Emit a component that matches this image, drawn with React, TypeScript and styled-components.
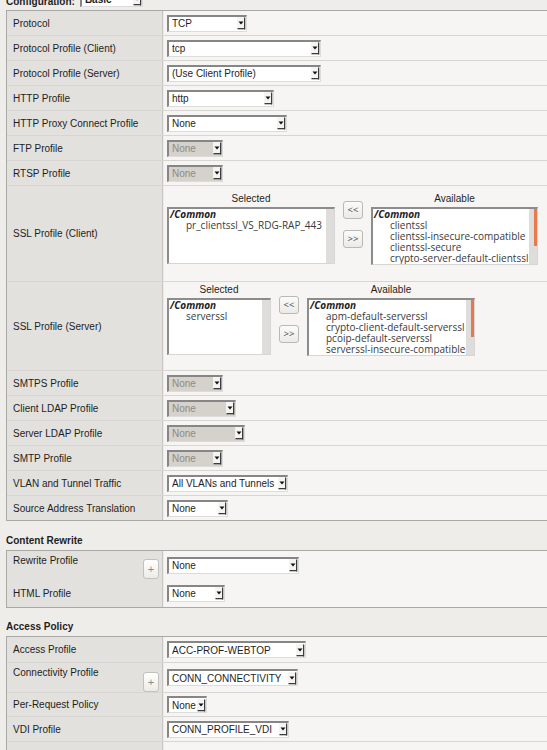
import React from 'react'
import styled, { createGlobalStyle } from 'styled-components'

const Global = createGlobalStyle`
  html, body {
    margin: 0;
    padding: 0;
    background: #eeede9;
    overflow: hidden;
  }
  body {
    font-family: "Liberation Sans", Arial, sans-serif;
    font-size: 10px;
    color: #1e1e1e;
  }
`

const Page = styled.div`
  width: 547px;
  height: 750px;
  overflow: hidden;
`

const TopBar = styled.div`
  display: flex;
  align-items: flex-end;
  gap: 5px;
  height: 15px;
  margin-top: -8px;
  padding: 0 0 3px 6px;
  font-weight: bold;
`

const SectionTitle = styled.div<{ $top: number }>`
  padding: ${(p) => p.$top}px 0 4px 6px;
  line-height: 11px;
  font-weight: bold;
`

const Table = styled.div`
  margin-left: 6px;
  width: 560px;
  border-top: 1px solid #a9a9a6;
  border-left: 1px solid #a9a9a6;
  border-bottom: 1px solid #a9a9a6;
`

const Row = styled.div<{ $h?: number }>`
  display: grid;
  grid-template-columns: 156px 1fr;
  height: ${(p) => p.$h ?? 24}px;
  & + & {
    border-top: 1px solid #d7d6d2;
  }
`

const Label = styled.div<{ $top?: boolean }>`
  display: flex;
  align-items: ${(p) => (p.$top ? 'flex-start' : 'center')};
  justify-content: space-between;
  padding: ${(p) => (p.$top ? '4px 3px 0 6px' : '0 3px 0 6px')};
  line-height: 11px;
  background: #e2e1dd;
  border-right: 1px solid #c6c5c1;
`

const Value = styled.div<{ $padTop?: number }>`
  display: flex;
  align-items: ${(p) => (p.$padTop !== undefined ? 'flex-start' : 'center')};
  padding: ${(p) => p.$padTop ?? 0}px 0 0 3px;
  background: #f6f5f3;
  border-left: 1px solid #ecebe8;
`

const PlusButton = styled.button`
  align-self: center;
  width: 16px;
  height: 20px;
  padding: 0;
  margin-top: 4px;
  border: 1px solid #c2c1bd;
  border-radius: 3px;
  background: linear-gradient(#ffffff, #ecebe8);
  color: #8a8a8a;
  font-family: "Liberation Sans", Arial, sans-serif;
  font-size: 11px;
  line-height: 16px;
`

const SelectBox = styled.div<{ $w: number; $disabled?: boolean }>`
  display: flex;
  align-items: center;
  box-sizing: border-box;
  width: ${(p) => p.$w}px;
  height: 17px;
  padding-left: 3px;
  background: ${(p) => (p.$disabled ? '#d5d2cb' : '#ffffff')};
  color: ${(p) => (p.$disabled ? '#8b8a87' : '#1e1e1e')};
  border-top: 2px solid #868686;
  border-left: 2px solid #868686;
  border-right: 1px solid #dcdcdc;
  border-bottom: 1px solid #dcdcdc;
  white-space: nowrap;
  line-height: 13px;
`

const SelectText = styled.span`
  flex: 1;
  overflow: hidden;
`

const Arrow = () => (
  <svg width="9" height="13" viewBox="0 0 9 13" style={{ flexShrink: 0 }}>
    <rect x="0" y="0" width="8" height="12" fill="#f4f4f2" />
    <path d="M1.5 4.5h5l-2.5 3z" fill="#111" />
    <rect x="7" y="0.5" width="1.3" height="12" fill="#3c3c3c" />
    <rect x="0.5" y="11" width="7.5" height="1.3" fill="#3c3c3c" />
  </svg>
)

const Select: React.FC<{ width: number; value: string; disabled?: boolean }> = ({
  width,
  value,
  disabled,
}) => (
  <SelectBox $w={width} $disabled={disabled}>
    <SelectText>{value}</SelectText>
    <Arrow />
  </SelectBox>
)

const Picker = styled.div`
  display: flex;
  align-items: flex-start;
  gap: 8px;
`

const PickerColumn = styled.div<{ $w: number }>`
  display: flex;
  flex-direction: column;
  width: ${(p) => p.$w}px;
`

const PickerHeading = styled.div`
  text-align: center;
  line-height: 11px;
  height: 11px;
  margin-bottom: 3px;
`

const ListBox = styled.div<{ $h: number }>`
  display: flex;
  box-sizing: border-box;
  height: ${(p) => p.$h}px;
  background: #fff;
  border-top: 2px solid #8c8c8c;
  border-left: 2px solid #8c8c8c;
  border-right: 1px solid #d6d6d6;
  border-bottom: 1px solid #d6d6d6;
  overflow: hidden;
`

const ListItems = styled.div`
  flex: 1;
  min-width: 0;
  padding: 0 0 0 1px;
  font-family: "Open Sans", "Noto Sans", sans-serif;
  font-size: 10px;
  line-height: 11px;
  color: #3a3a3a;
  white-space: nowrap;
  overflow: hidden;
`

const Folder = styled.div`
  font-weight: bold;
  font-style: italic;
  color: #222;
`

const Item = styled.div`
  padding-left: 16px;
`

const Track = styled.div`
  display: flex;
  justify-content: flex-end;
  width: 8px;
  flex-shrink: 0;
  background: #dedddb;
`

const Thumb = styled.div`
  width: 3px;
  height: 37px;
  background: #e8794c;
`

const MoveButtons = styled.div<{ $top: number }>`
  display: flex;
  flex-direction: column;
  gap: 11px;
  padding-top: ${(p) => p.$top}px;
`

const MoveButton = styled.button`
  width: 20px;
  height: 18px;
  padding: 0;
  border: 1px solid #b9b9b6;
  border-radius: 3px;
  background: linear-gradient(#fbfbfa, #ebeae7);
  color: #444;
  font-family: "Open Sans", "Noto Sans", sans-serif;
  font-size: 9.5px;
  line-height: 14px;
`

const ProfilePicker: React.FC<{
  selected: string[]
  available: string[]
  selWidth: number
  availWidth: number
  buttonsTop: number
}> = ({ selected, available, selWidth, availWidth, buttonsTop }) => (
  <Picker>
    <PickerColumn $w={selWidth}>
      <PickerHeading>Selected</PickerHeading>
      <ListBox $h={57}>
        <ListItems>
          <Folder>/Common</Folder>
          {selected.map((s) => (
            <Item key={s}>{s}</Item>
          ))}
        </ListItems>
        <Track />
      </ListBox>
    </PickerColumn>
    <MoveButtons $top={buttonsTop}>
      <MoveButton>&lt;&lt;</MoveButton>
      <MoveButton>&gt;&gt;</MoveButton>
    </MoveButtons>
    <PickerColumn $w={availWidth}>
      <PickerHeading>Available</PickerHeading>
      <ListBox $h={58}>
        <ListItems>
          <Folder>/Common</Folder>
          {available.map((s) => (
            <Item key={s}>{s}</Item>
          ))}
        </ListItems>
        <Track>
          <Thumb />
        </Track>
      </ListBox>
    </PickerColumn>
  </Picker>
)

type Field = { label: string; width: number; value: string; disabled?: boolean }

const general: Field[] = [
  { label: 'Protocol', width: 80, value: 'TCP' },
  { label: 'Protocol Profile (Client)', width: 154, value: 'tcp' },
  { label: 'Protocol Profile (Server)', width: 154, value: '(Use Client Profile)' },
  { label: 'HTTP Profile', width: 107, value: 'http' },
  { label: 'HTTP Proxy Connect Profile', width: 120, value: 'None' },
  { label: 'FTP Profile', width: 56, value: 'None', disabled: true },
  { label: 'RTSP Profile', width: 56, value: 'None', disabled: true },
]

const lower: Field[] = [
  { label: 'SMTPS Profile', width: 56, value: 'None', disabled: true },
  { label: 'Client LDAP Profile', width: 69, value: 'None', disabled: true },
  { label: 'Server LDAP Profile', width: 78, value: 'None', disabled: true },
  { label: 'SMTP Profile', width: 56, value: 'None', disabled: true },
  { label: 'VLAN and Tunnel Traffic', width: 121, value: 'All VLANs and Tunnels' },
  { label: 'Source Address Translation', width: 61, value: 'None' },
]

const FieldRow: React.FC<Field> = ({ label, width, value, disabled }) => (
  <Row>
    <Label>{label}</Label>
    <Value>
      <Select width={width} value={value} disabled={disabled} />
    </Value>
  </Row>
)

export default function App() {
  return (
    <Page>
      <Global />
      <TopBar>
        <span>Configuration:</span>
        <Select width={63} value="Basic" />
      </TopBar>

      <Table>
        {general.map((f) => (
          <FieldRow key={f.label} {...f} />
        ))}
        <Row $h={95}>
          <Label>SSL Profile (Client)</Label>
          <Value $padTop={7}>
            <ProfilePicker
              selWidth={168}
              availWidth={167}
              buttonsTop={8}
              selected={['pr_clientssl_VS_RDG-RAP_443']}
              available={[
                'clientssl',
                'clientssl-insecure-compatible',
                'clientssl-secure',
                'crypto-server-default-clientssl',
              ]}
            />
          </Value>
        </Row>
        <Row $h={88}>
          <Label>SSL Profile (Server)</Label>
          <Value $padTop={2}>
            <ProfilePicker
              selWidth={104}
              availWidth={168}
              buttonsTop={12}
              selected={['serverssl']}
              available={[
                'apm-default-serverssl',
                'crypto-client-default-serverssl',
                'pcoip-default-serverssl',
                'serverssl-insecure-compatible',
              ]}
            />
          </Value>
        </Row>
        {lower.map((f) => (
          <FieldRow key={f.label} {...f} />
        ))}
      </Table>

      <SectionTitle $top={14}>Content Rewrite</SectionTitle>
      <Table>
        <Row $h={27}>
          <Label $top>
            Rewrite Profile
            <PlusButton>+</PlusButton>
          </Label>
          <Value>
            <Select width={132} value="None" />
          </Value>
        </Row>
        <Row $h={28}>
          <Label>HTML Profile</Label>
          <Value>
            <Select width={58} value="None" />
          </Value>
        </Row>
      </Table>

      <SectionTitle $top={13}>Access Policy</SectionTitle>
      <Table>
        <Row $h={25}>
          <Label>Access Profile</Label>
          <Value>
            <Select width={139} value="ACC-PROF-WEBTOP" />
          </Value>
        </Row>
        <Row $h={29}>
          <Label $top>
            Connectivity Profile
            <PlusButton>+</PlusButton>
          </Label>
          <Value>
            <Select width={131} value="CONN_CONNECTIVITY" />
          </Value>
        </Row>
        <Row $h={23}>
          <Label>Per-Request Policy</Label>
          <Value>
            <Select width={40} value="None" />
          </Value>
        </Row>
        <Row $h={24}>
          <Label>VDI Profile</Label>
          <Value>
            <Select width={122} value="CONN_PROFILE_VDI" />
          </Value>
        </Row>
        <Row $h={24}>
          <Label />
          <Value />
        </Row>
      </Table>
    </Page>
  )
}
